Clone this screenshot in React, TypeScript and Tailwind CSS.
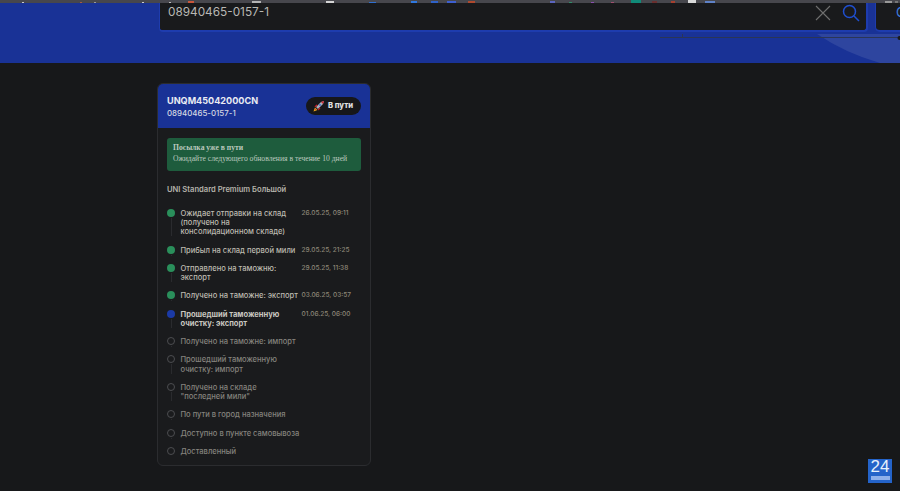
const dotDone = "bg-[#2a8f5b]";

type Step = { label: string[]; date?: string; state: "done" | "current" | "todo"; last?: boolean };

const steps: Step[] = [
  { label: ["Ожидает отправки на склад", "(получено на", "консолидационном складе)"], date: "26.05.25, 09:11", state: "done" },
  { label: ["Прибыл на склад первой мили"], date: "29.05.25, 21:25", state: "done" },
  { label: ["Отправлено на таможню:", "экспорт"], date: "29.05.25, 11:38", state: "done" },
  { label: ["Получено на таможне: экспорт"], date: "03.06.25, 03:57", state: "done" },
  { label: ["Прошедший таможенную", "очистку: экспорт"], date: "01.06.25, 06:00", state: "current" },
  { label: ["Получено на таможне: импорт"], state: "todo" },
  { label: ["Прошедший таможенную", "очистку: импорт"], state: "todo" },
  { label: ["Получено на складе", "\"последней мили\""], state: "todo" },
  { label: ["По пути в город назначения"], state: "todo" },
  { label: ["Доступно в пункте самовывоза"], state: "todo" },
  { label: ["Доставленный"], state: "todo", last: true },
];

function Specks() {
  return (
    <div className="flex h-[3px] items-end bg-[#47474d]">
      <span className="ml-[22px] h-[1px] w-[2px] bg-[#c9c9c9]" />
      <span className="ml-[56px] h-[1px] w-[2px] bg-[#a85a40]" />
      <span className="ml-[12px] h-[1px] w-[2px] bg-[#999]" />
      <span className="ml-[46px] h-[1px] w-[2px] bg-[#ccc]" />
      <span className="ml-[25px] h-[1px] w-[2px] bg-[#bbb]" />
      <span className="ml-[17px] h-[2px] w-[6px] bg-[#c9573c]" />
      <span className="ml-[58px] h-[2px] w-[9px] bg-[#b5b5b5]" />
      <span className="ml-[65px] h-[2px] w-[8px] bg-[#d5d5d5]" />
      <span className="ml-[35px] h-[1px] w-[7px] bg-[#2f6fd0]" />
      <span className="ml-[35px] h-[2px] w-[6px] bg-[#2f78e0]" />
      <span className="ml-[14px] h-[2px] w-[7px] bg-[#2f62c8]" />
      <span className="ml-[9px] h-[2px] w-[9px] bg-[#3d5fd0]" />
      <span className="ml-[12px] h-[2px] w-[7px] bg-[#b0492e]" />
      <span className="ml-[75px] h-[2px] w-[5px] bg-[#5b65c0]" />
      <span className="ml-[14px] h-[1px] w-[3px] bg-[#2f8f6a]" />
      <span className="ml-[19px] h-[1px] w-[3px] bg-[#8a4fb0]" />
      <span className="ml-[17px] h-[1px] w-[3px] bg-[#a04f70]" />
      <span className="ml-[17px] h-[3px] w-[10px] bg-[#108a78]" />
      <span className="ml-[11px] h-[2px] w-[5px] bg-[#6a2f2f]" />
      <span className="ml-[14px] h-[2px] w-[4px] bg-[#a8402f]" />
      <span className="ml-[13px] h-[3px] w-[8px] bg-[#d8d8d8]" />
      <span className="ml-[9px] h-[2px] w-[10px] bg-[#5f82c8]" />
      <span className="ml-auto mr-[3px] h-[2px] w-[7px] bg-[#999]" />
      <span className="mr-[2px] h-[2px] w-[3px] bg-[#777]" />
    </div>
  );
}

function Rocket() {
  return (
    <svg width="12" height="12" viewBox="0 0 12 12" className="shrink-0">
      <path d="M0.5 11.5 L2 7.5 L4.5 10 Z" fill="#f2b01e" />
      <path d="M1.5 10.5 L2.6 8.4 L3.6 9.4 Z" fill="#e0301e" />
      <path d="M3 7 L8 2 L11 1 L10 4 L5 9 Z" fill="#aab0ba" />
      <path d="M8 2 L11 1 L10 4 Z" fill="#d8262e" />
      <path d="M3 7 L1.4 6.8 L3.4 4.6 L4.8 5.2 Z M5 9 L5.2 10.6 L7.4 8.6 L6.8 7.2 Z" fill="#c2202a" />
      <circle cx="7" cy="5" r="1" fill="#3f6fc8" />
    </svg>
  );
}

function Timeline() {
  return (
    <div className="flex flex-col">
      {steps.map((s, i) => {
        const labelClass =
          s.state === "current"
            ? "font-bold text-[#c9c7c0]"
            : s.state === "done"
            ? "font-medium text-[#bdbab0]"
            : "font-medium text-[#85837d]";
        return (
          <div key={i} className="relative flex pb-[9.15px]">
            <div className="relative w-[13.5px] shrink-0">
              {s.state === "todo" ? (
                <div className="h-[8px] w-[8px] rounded-full border border-[#4c4d50]" />
              ) : (
                <div className={`h-[8px] w-[8px] rounded-full ${s.state === "done" ? dotDone : "bg-[#1b3aa6]"}`} />
              )}
              {!s.last && <div className="absolute left-[3.5px] top-[9px] bottom-0 w-px bg-[#2a2b2e]" />}
            </div>
            <div className={`w-[121px] shrink-0 text-[7.55px] leading-[9.15px] ${labelClass}`}>
              {s.label.map((l, j) => (
                <div key={j} className="whitespace-nowrap">{l}</div>
              ))}
            </div>
            {s.date && (
              <div className="whitespace-nowrap text-[6.5px] font-medium leading-[9.15px] text-[#8d8778]">{s.date}</div>
            )}
          </div>
        );
      })}
    </div>
  );
}

export default function App() {
  return (
    <div className="h-[491px] w-[900px] overflow-hidden bg-[#17181a] font-['Inter',sans-serif]">
      <Specks />
      <header className="relative h-[60px] overflow-hidden bg-[#193296]">
        <svg className="absolute inset-0" width="900" height="60" viewBox="0 0 900 60">
          <path d="M817 31 Q845 50 880 60 L900 60 L900 31 Z" fill="#2e459f" />
          <line x1="660" y1="34.5" x2="900" y2="34.5" stroke="#2a3556" strokeWidth="1" />
          <line x1="682.5" y1="31" x2="682.5" y2="34" stroke="#2a3556" strokeWidth="1" />
          <circle cx="899.5" cy="35" r="2" fill="#1a1a1a" />
        </svg>
        <div className="relative flex h-[29px] items-start gap-[7px] pl-[159px]">
          <div className="flex h-[29px] w-[709px] items-start rounded-b-[4px] border-b-2 border-l border-r-2 border-[#1e3cae] bg-[#191a1c] pl-[8px] pr-[6px]">
            <span className="mt-[1px] text-[11.8px] leading-[16px] text-[#b8b8b4]">08940465-0157-1</span>
            <svg className="ml-auto mt-[1px]" width="18" height="18" viewBox="0 0 18 18" fill="none" stroke="#6f6f6f" strokeWidth="1.1">
              <path d="M2 2 L16 16 M16 2 L2 16" />
            </svg>
            <svg className="ml-[10px] mt-[1px]" width="18" height="18" viewBox="0 0 18 18" fill="none" stroke="#1f4fd0" strokeWidth="1.5">
              <circle cx="7.5" cy="7.5" r="6" />
              <path d="M12 12 L17 17" />
            </svg>
          </div>
          <div className="flex h-[29px] flex-1 items-start overflow-hidden rounded-bl-[5px] border-b-2 border-l border-[#1e3cae] bg-[#191a1c] pl-[20px]">
            <span className="mt-[1px] text-[13px] leading-[16px] text-[#3f7fe0]">C</span>
          </div>
        </div>
      </header>
      <div className="pl-[157px] pt-[20px]">
        <section className="h-[383px] w-[214px] overflow-hidden rounded-[6px] border border-[#2b2c2f] bg-[#1a1b1d]">
          <div className="flex h-[44px] items-center justify-between bg-[#193296] pl-[9px] pr-[9px]">
            <div>
              <div className="text-[9.1px] font-bold leading-[13px] text-[#e9ebf2]">UNQM45042000CN</div>
              <div className="mt-[1px] text-[7.9px] font-medium leading-[11px] text-[#d5d8e2]">08940465-0157-1</div>
            </div>
            <div className="flex h-[18px] w-[55px] items-center gap-[3px] rounded-full bg-[#16171a] pl-[7px]">
              <Rocket />
              <span className="text-[7.6px] font-extrabold text-[#e0e0e0]">В пути</span>
            </div>
          </div>
          <div className="px-[9px] pt-[10px]">
            <div className="h-[33px] rounded-[3px] bg-[#1e5c3d] px-[6px] pt-[5px] font-['Liberation_Serif',serif] text-[7.64px] leading-[10.7px] text-[#bcc9bf]">
              <div className="font-bold">Посылка уже в пути</div>
              <div className="whitespace-nowrap">Ожидайте следующего обновления в течение 10 дней</div>
            </div>
            <div className="mt-[14px] text-[7.6px] font-semibold leading-[10px] text-[#b5b3ab]">UNI Standard Premium Большой</div>
            <div className="mt-[14px]">
              <Timeline />
            </div>
          </div>
        </section>
      </div>
      <div className="absolute left-[868px] top-[459px] flex h-[24px] w-[24px] flex-col items-center bg-[#2463c9]">
        <span className="font-['Liberation_Sans',sans-serif] text-[17px] leading-[16px] text-[#e8f0fb]">24</span>
        <span className="mt-[1px] h-[4px] w-[19px] bg-[#8fb0ea]" />
      </div>
    </div>
  );
}
